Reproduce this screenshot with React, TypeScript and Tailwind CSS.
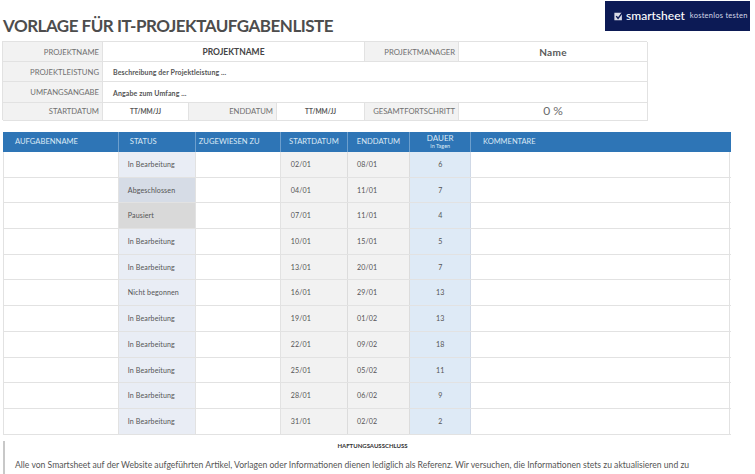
const font = "font-['Lato','Liberation_Sans',sans-serif]";

const tasks: [string, string, string, number][] = [
  ["In Bearbeitung", "02/01", "08/01", 6],
  ["Abgeschlossen", "04/01", "11/01", 7],
  ["Pausiert", "07/01", "11/01", 4],
  ["In Bearbeitung", "10/01", "15/01", 5],
  ["In Bearbeitung", "13/01", "20/01", 7],
  ["Nicht begonnen", "16/01", "29/01", 13],
  ["In Bearbeitung", "19/01", "01/02", 13],
  ["In Bearbeitung", "22/01", "09/02", 18],
  ["In Bearbeitung", "25/01", "05/02", 11],
  ["In Bearbeitung", "28/01", "06/02", 9],
  ["In Bearbeitung", "31/01", "02/02", 2],
];

function statusBg(s: string) {
  if (s === "Abgeschlossen") return "bg-[#d6dce6]";
  if (s === "Pausiert") return "bg-[#d9d9d9]";
  return "bg-[#e9edf5]";
}

function Label({ children, className = "" }: { children: React.ReactNode; className?: string }) {
  return (
    <div className={`flex items-center justify-end bg-[#f2f2f2] pt-[2px] pr-[3px] text-[7.7px] text-[#707070] border-r border-b border-[#e2e2e2] ${className}`}>
      {children}
    </div>
  );
}

function Head({ children, className = "" }: { children: React.ReactNode; className?: string }) {
  return (
    <div className={`flex items-center border-r border-[#6d9fcd] text-[7.6px] text-[#dce9f5] ${className}`}>
      {children}
    </div>
  );
}

export default function App() {
  return (
    <div className={`${font} h-[474px] w-[755px] overflow-hidden bg-white`}>
      <div className="flex h-[41px] items-start justify-between">
        <h1 className="mt-[14px] ml-[3px] text-[17px] leading-[23px] font-bold tracking-[-0.5px] text-[#4d4d4d]">
          VORLAGE FÜR IT-PROJEKTAUFGABENLISTE
        </h1>
        <div className="mt-[1px] mr-[5px] flex h-[30px] w-[145px] items-center bg-[#0c1a55] pl-[9px] text-white">
          <svg viewBox="0 0 12 12" className="h-[9px] w-[9px] shrink-0">
            <rect x="0.5" y="1" width="10" height="10" fill="#d9dbe6" />
            <path d="M3 5.5 L5.4 8.5 L11.5 0.5" fill="none" stroke="#0c1a55" strokeWidth="2" />
          </svg>
          <span className="ml-[3px] text-[12px] leading-none font-medium">smartsheet</span>
          <span className="ml-[5px] text-[7.5px] leading-none tracking-[0.25px] whitespace-nowrap text-[#d5d8e6]">kostenlos testen</span>
        </div>
      </div>

      <div className="ml-[2px] grid h-[79px] w-[645px] grid-cols-[100px_86px_88px_88px_94px_189px] grid-rows-[20px_20px_20.5px_18.5px] border-t border-l border-[#e2e2e2]">
        <Label>PROJEKTNAME</Label>
        <div className="col-span-3 flex items-center justify-center border-r border-b border-[#e2e2e2] pt-[2px] text-[8.5px] font-bold text-[#444]">
          PROJEKTNAME
        </div>
        <Label>PROJEKTMANAGER</Label>
        <div className="flex items-center justify-center border-r border-b border-[#e2e2e2] pt-[1px] text-[10px] font-bold tracking-[0.3px] text-[#5a5a5a]">
          Name
        </div>

        <Label>PROJEKTLEISTUNG</Label>
        <div className="col-span-5 flex items-center border-r border-b border-[#e2e2e2] pt-[2px] pl-[10px] text-[7px] font-bold tracking-[0.1px] text-[#555]">
          Beschreibung der Projektleistung ...
        </div>

        <Label>UMFANGSANGABE</Label>
        <div className="col-span-5 flex items-center border-r border-b border-[#e2e2e2] pt-[2px] pl-[10px] text-[7px] font-bold tracking-[0.1px] text-[#555]">
          Angabe zum Umfang ...
        </div>

        <Label>STARTDATUM</Label>
        <div className="flex items-center justify-center border-r border-b border-[#e2e2e2] pt-[1px] text-[6.5px] font-bold text-[#555]">TT/MM/JJ</div>
        <Label>ENDDATUM</Label>
        <div className="flex items-center justify-center border-r border-b border-[#e2e2e2] pt-[1px] text-[6.5px] font-bold text-[#555]">TT/MM/JJ</div>
        <Label>GESAMTFORTSCHRITT</Label>
        <div className="flex items-center justify-center border-r border-b border-[#e2e2e2] text-[12px] text-[#6b6b6b]">0 %</div>
      </div>

      <div className="mt-[12px] ml-[3px] w-[727.5px]">
        <div className="grid h-[20px] grid-cols-[115.8px_77px_85px_67.2px_62px_61.5px_258.5px] bg-[#2e75b6]">
          <Head className="pl-[12px]">AUFGABENNAME</Head>
          <Head className="pl-[11px]">STATUS</Head>
          <Head className="pl-[3px] text-[7.2px]">ZUGEWIESEN ZU</Head>
          <Head className="justify-center">STARTDATUM</Head>
          <Head className="justify-center">ENDDATUM</Head>
          <Head className="flex-col justify-center">
            <span className="text-[8px] leading-[9px]">DAUER</span>
            <span className="text-[5.5px] leading-[7px]">in Tagen</span>
          </Head>
          <div className="flex items-center pl-[11.5px] text-[7.5px] text-[#dce9f5]">KOMMENTARE</div>
        </div>
        {tasks.map(([status, start, end, days], i) => (
          <div
            key={i}
            className="grid h-[25.7px] grid-cols-[115.8px_77px_85px_67.2px_62px_61.5px_258.5px] border-b border-[#e2e2e2] text-[7.1px] tracking-[0.1px] text-[#555]"
          >
            <div className="border-r border-l border-[#e2e2e2]" />
            <div className={`flex items-center border-r border-[#e2e2e2] pt-[2px] pl-[9px] ${statusBg(status)}`}>{status}</div>
            <div className="border-r border-[#e2e2e2]" />
            <div className="flex items-center border-r border-[#dcdcdc] bg-[#f2f2f2] pt-[2px] pl-[10px]">{start}</div>
            <div className="flex items-center border-r border-[#dcdcdc] bg-[#f2f2f2] pt-[2px] pl-[9px]">{end}</div>
            <div className="flex items-center justify-center border-r border-[#cfd8e6] bg-[#deeaf6] pt-[2px]">{days}</div>
            <div className="border-r border-[#e2e2e2]" />
          </div>
        ))}
      </div>

      <div className="mt-[6px] ml-[3px] flex h-[34px] w-[727px] border-l-2 border-[#c8c8c8]">
        <div className="w-full">
          <p className="pl-[10px] text-center text-[6px] leading-[9px] font-bold text-[#333]">HAFTUNGSAUSSCHLUSS</p>
          <p className="mt-[9px] pl-[10px] text-[8.6px] leading-[13px] whitespace-nowrap text-[#555]">
            Alle von Smartsheet auf der Website aufgeführten Artikel, Vorlagen oder Informationen dienen lediglich als Referenz. Wir versuchen, die Informationen stets zu aktualisieren und zu
          </p>
        </div>
      </div>
    </div>
  );
}
